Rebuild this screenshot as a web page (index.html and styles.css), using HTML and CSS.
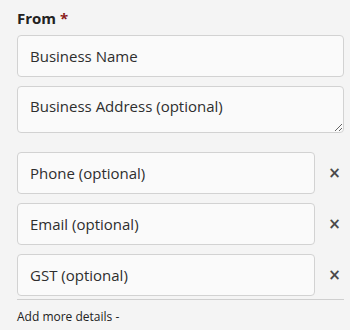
FILE: index.html
```
<!DOCTYPE html>
<html lang="en">
    <head>
        <meta charset="UTF-8" />
        <meta name="viewport" content="width=device-width, initial-scale=1.0" />
        <title>Invoice - From</title>
        <link rel="stylesheet" href="styles.css">
    </head>
    <body>
        <section class="from-block">
            <label class="block-title">From <span class="required">*</span></label>
            <div class="field-group">
                <input class="field" type="text" placeholder="Business Name">
                <textarea class="field field-area" placeholder="Business Address (optional)"></textarea>
            </div>
            <div class="field-group extra">
                <div class="field-row">
                    <input class="field" type="text" placeholder="Phone (optional)">
                    <button class="remove">&times;</button>
                </div>
                <div class="field-row">
                    <input class="field" type="text" placeholder="Email (optional)">
                    <button class="remove">&times;</button>
                </div>
                <div class="field-row">
                    <input class="field" type="text" placeholder="GST (optional)">
                    <button class="remove">&times;</button>
                </div>
            </div>
            <div class="more-details">Add more details -</div>
        </section>
    </body>
</html>
```

FILE: styles.css
```
body {
    margin: 0;
    background-color: #f4f4f4;
    font-family: "Open Sans", "Noto Sans", Arial, sans-serif;
    color: #222;
}

.from-block {
    padding: 8px 6px 0 17px;
}

.block-title {
    display: block;
    font-size: 15px;
    font-weight: 700;
    line-height: 20px;
    margin-bottom: 7px;
}

.required {
    color: #8b1c1c;
}

.field-group {
    display: flex;
    flex-direction: column;
    gap: 9px;
}

.field-group.extra {
    margin-top: 19px;
    padding-bottom: 3px;
    border-bottom: 1px solid #cfcfcf;
}

.field {
    box-sizing: border-box;
    width: 100%;
    height: 42px;
    padding: 0 12px;
    background-color: #fafafa;
    border: 1px solid #d2d2d2;
    border-radius: 4px;
    font-family: inherit;
    font-size: 15px;
    color: #222;
}

.field::placeholder {
    color: #2e2e2e;
}

.field-area {
    height: 47px;
    padding-top: 9px;
    resize: vertical;
    display: block;
}

.field-row {
    display: flex;
    align-items: center;
}

.field-row .field {
    flex: 1;
}

.remove {
    width: 29px;
    flex: none;
    background: none;
    border: none;
    padding: 0 0 0 10px;
    text-align: center;
    font-family: "DejaVu Sans", sans-serif;
    font-size: 15px;
    font-weight: 700;
    color: #4a4a4a;
    cursor: pointer;
}

.more-details {
    font-size: 12px;
    margin-top: 8px;
    color: #222;
}
```
